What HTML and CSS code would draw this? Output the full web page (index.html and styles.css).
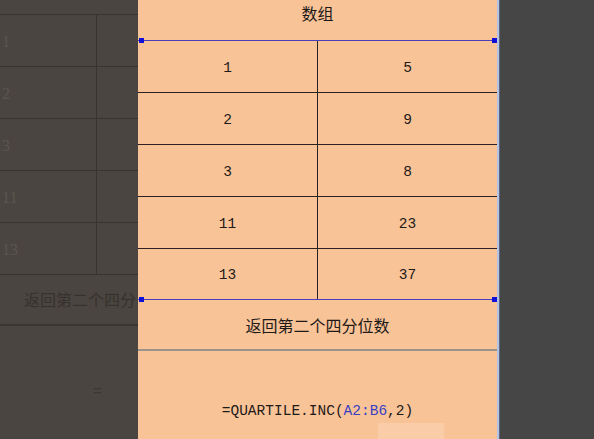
FILE: index.html
```html
<!DOCTYPE html>
<html lang="zh">
<head>
<meta charset="utf-8">
<title>QUARTILE.INC</title>
<link rel="stylesheet" href="styles.css">
</head>
<body>
<div class="screen">
  <div class="sheet">
    <div class="sheet-top"></div>
    <div class="sheet-grid">
      <div class="s-row"><div class="s-a">1</div><div class="s-b"></div></div>
      <div class="s-row"><div class="s-a">2</div><div class="s-b"></div></div>
      <div class="s-row"><div class="s-a">3</div><div class="s-b"></div></div>
      <div class="s-row"><div class="s-a">11</div><div class="s-b"></div></div>
      <div class="s-row"><div class="s-a">13</div><div class="s-b"></div></div>
    </div>
    <div class="s-label">返回第二个四分</div>
    <div class="s-formula">=</div>
  </div>

  <div class="panel">
    <div class="head">数组</div>
    <div class="sel">
      <div class="row"><div class="c1">1</div><div class="c2">5</div></div>
      <div class="row"><div class="c1">2</div><div class="c2">9</div></div>
      <div class="row"><div class="c1">3</div><div class="c2">8</div></div>
      <div class="row"><div class="c1">11</div><div class="c2">23</div></div>
      <div class="row last"><div class="c1">13</div><div class="c2">37</div></div>
      <span class="handle tl"></span>
      <span class="handle tr"></span>
      <span class="handle bl"></span>
      <span class="handle br"></span>
    </div>
    <div class="label">返回第二个四分位数</div>
    <div class="formula">=QUARTILE.INC(<span class="ref">A2:B6</span>,2)<span class="mark"></span></div>
  </div>

  <div class="edge"></div>
  <div class="dark"></div>
</div>
</body>
</html>
```
FILE: styles.css
```css
html, body {
  margin: 0;
  padding: 0;
  width: 594px;
  height: 439px;
  overflow: hidden;
  background: #464646;
}

.screen {
  display: flex;
  width: 594px;
  height: 439px;
  overflow: hidden;
}

/* dimmed sheet on the left */
.sheet {
  width: 138px;
  flex: none;
  background: #4a4540;
  display: flex;
  flex-direction: column;
  overflow: hidden;
  color: #37332f;
}

.sheet-top {
  height: 15px;
  border-bottom: 1px solid #38342f;
  box-sizing: border-box;
  flex: none;
}

.sheet-grid {
  display: flex;
  flex-direction: column;
}

.s-row {
  display: flex;
  height: 52px;
  border-bottom: 1px solid #38342f;
  box-sizing: border-box;
}

.s-a {
  width: 97px;
  border-right: 1px solid #38342f;
  display: flex;
  align-items: center;
  padding-left: 2px;
  padding-top: 3px;
  box-sizing: border-box;
  font-family: "Liberation Serif", serif;
  font-size: 16px;
  color: #5a554f;
}

.s-b {
  flex: 1;
}

.s-label {
  height: 51px;
  border-bottom: 2px solid #3a3632;
  box-sizing: border-box;
  padding-left: 24px;
  line-height: 48px;
  white-space: nowrap;
  font-family: "Noto Sans CJK SC", sans-serif;
  font-size: 16px;
  color: #36322d;
}

.s-formula {
  padding-left: 93px;
  padding-top: 58px;
  font-family: "Liberation Mono", monospace;
  font-size: 15px;
  color: #3a3631;
}

/* highlighted panel */
.panel {
  width: 359px;
  flex: none;
  background: #f9c398;
  display: flex;
  flex-direction: column;
  color: #1e1a17;
}

.head {
  height: 40px;
  box-sizing: border-box;
  text-align: center;
  padding-top: 1px;
  line-height: 24px;
  font-family: "Noto Sans CJK SC", sans-serif;
  font-size: 16px;
}

.sel {
  position: relative;
  border-top: 1px solid #4a3fb8;
  border-bottom: 1px solid #4a3fb8;
}

.row {
  display: flex;
  height: 52px;
  border-bottom: 1px solid #2b2220;
  box-sizing: border-box;
}

.row.last {
  height: 50px;
  border-bottom: none;
}

.c1, .c2 {
  display: flex;
  align-items: center;
  justify-content: center;
  padding-top: 2px;
  box-sizing: border-box;
  font-family: "Liberation Mono", monospace;
  font-size: 14.5px;
}

.c1 {
  width: 180px;
  border-right: 1px solid #2b2220;
}

.c2 {
  flex: 1;
}

.handle {
  position: absolute;
  width: 5px;
  height: 5px;
  background: #1010d8;
}

.handle.tl { left: 1px; top: -3px; }
.handle.tr { right: 0; top: -3px; }
.handle.bl { left: 1px; bottom: -3px; }
.handle.br { right: 0; bottom: -3px; }

.label {
  height: 51px;
  border-bottom: 2px solid #9a938c;
  box-sizing: border-box;
  text-align: center;
  line-height: 50px;
  font-family: "Noto Sans CJK SC", sans-serif;
  font-size: 16px;
}

.formula {
  position: relative;
  flex: 1;
  text-align: center;
  padding-top: 51px;
  padding-left: 0;
  font-family: "Liberation Mono", monospace;
  font-size: 14.5px;
  line-height: 18px;
  white-space: nowrap;
}

.ref {
  color: #3b3fc4;
}

.mark {
  position: absolute;
  left: 240px;
  top: 72px;
  width: 66px;
  height: 20px;
  background: rgba(255, 236, 222, 0.22);
}

.edge {
  width: 3px;
  flex: none;
  background: #b4c2e6;
  border-right: 1px solid #5c6680;
  box-sizing: border-box;
}

.dark {
  flex: 1;
  background: #464646;
}
```
